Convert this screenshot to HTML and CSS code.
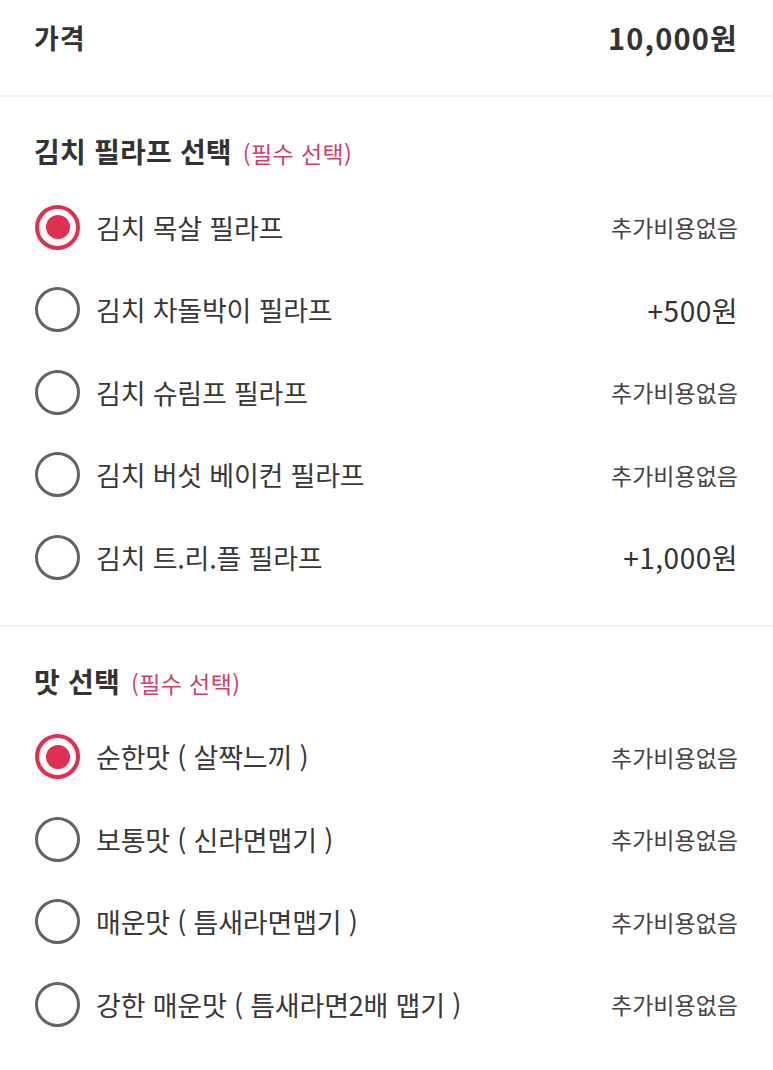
FILE: index.html
```html
<!DOCTYPE html>
<html lang="ko">
<head>
<meta charset="utf-8">
<link rel="stylesheet" href="styles.css">
</head>
<body>
<div class="page">
  <div class="price-row">
    <span class="price-label">가격</span>
    <span class="price-value">10,000원</span>
  </div>
  <section class="group">
    <h2 class="group-title">김치 필라프 선택 <span class="req">(필수 선택)</span></h2>
    <ul class="options">
      <li class="option"><span class="radio on"></span><span class="name">김치 목살 필라프</span><span class="extra">추가비용없음</span></li>
      <li class="option"><span class="radio"></span><span class="name">김치 차돌박이 필라프</span><span class="extra money">+500원</span></li>
      <li class="option"><span class="radio"></span><span class="name">김치 슈림프 필라프</span><span class="extra">추가비용없음</span></li>
      <li class="option"><span class="radio"></span><span class="name">김치 버섯 베이컨 필라프</span><span class="extra">추가비용없음</span></li>
      <li class="option"><span class="radio"></span><span class="name">김치 트.리.플 필라프</span><span class="extra money">+1,000원</span></li>
    </ul>
  </section>
  <section class="group">
    <h2 class="group-title">맛 선택 <span class="req">(필수 선택)</span></h2>
    <ul class="options">
      <li class="option"><span class="radio on"></span><span class="name">순한맛 ( 살짝느끼 )</span><span class="extra">추가비용없음</span></li>
      <li class="option"><span class="radio"></span><span class="name">보통맛 ( 신라면맵기 )</span><span class="extra">추가비용없음</span></li>
      <li class="option"><span class="radio"></span><span class="name">매운맛 ( 틈새라면맵기 )</span><span class="extra">추가비용없음</span></li>
      <li class="option"><span class="radio"></span><span class="name">강한 매운맛 ( 틈새라면2배 맵기 )</span><span class="extra">추가비용없음</span></li>
    </ul>
  </section>
</div>
</body>
</html>
```

FILE: styles.css
```css
* { box-sizing: border-box; }
html, body { margin: 0; padding: 0; background: #fff; }
body {
  font-family: "Noto Sans CJK KR", "Noto Sans", sans-serif;
  color: #333;
}
.page { width: 773px; }
.price-row {
  display: flex;
  justify-content: space-between;
  align-items: center;
  height: 74px;
  padding: 0 35px 0 34px;
  margin-bottom: 21px;
}
.price-label { font-size: 27px; font-weight: 700; color: #333; letter-spacing: 1px; }
.price-value { font-size: 29px; font-weight: 700; color: #333; letter-spacing: 1.2px; }
.group {
  border-top: 2px solid #f0f0f0;
  padding: 37px 35px 26px 34px;
}
.group-title {
  margin: 0;
  height: 34px;
  line-height: 34px;
  font-size: 28px;
  font-weight: 700;
  color: #333;
  letter-spacing: 0.2px;
}
.req { font-size: 23px; font-weight: 400; color: #d0406a; letter-spacing: 0.4px; margin-left: 3px; }
.options { list-style: none; margin: 0; padding: 18px 0 0; }
.option {
  display: flex;
  align-items: center;
  height: 82.5px;
}
.radio {
  flex: none;
  width: 45px;
  height: 45px;
  border-radius: 50%;
  border: 3px solid #636363;
  margin-left: 1px;
  margin-right: 16px;
  position: relative;
}
.radio.on { border: 4px solid #e0304f; }
.radio.on::after {
  content: "";
  position: absolute;
  left: 50%;
  top: 50%;
  width: 24px;
  height: 24px;
  margin: -12px 0 0 -12px;
  border-radius: 50%;
  background: #e0304f;
}
.name { flex: 1; font-size: 27px; color: #383838; letter-spacing: -0.2px; }
.extra { font-size: 23px; color: #444; }
.extra.money { font-size: 28px; color: #333; letter-spacing: 0.5px; }
```
